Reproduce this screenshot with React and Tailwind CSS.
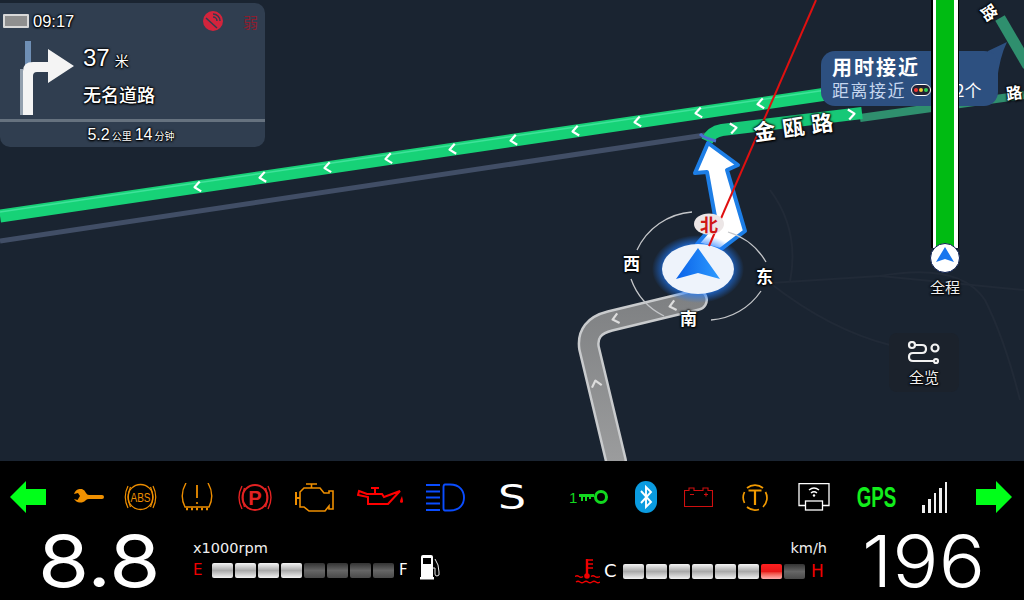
import React from "react";

const CJK = "font-['Noto_Sans_CJK_SC','Noto_Sans',sans-serif]";
const OUT = "[text-shadow:0_0_2px_#000,0_0_2px_#000,0_1px_2px_#000,0_0_3px_#000]";

function Chevron({ x, y, r = -8.5, c = "#fff", s = 2.2 }) {
  return (
    <path
      d="M3.5 -5 L-2.5 0 L3.5 5"
      transform={`translate(${x} ${y}) rotate(${r})`}
      fill="none"
      stroke={c}
      strokeWidth={s}
      strokeLinejoin="round"
    />
  );
}

const greenXs = [197, 262, 327, 388, 452, 513, 575, 637, 698, 760];

function MapDrawing() {
  return (
    <svg className="absolute inset-0" width="1024" height="461" viewBox="0 0 1024 461">
      <defs>
        <radialGradient id="glow">
          <stop offset="66%" stopColor="#1f7cff" stopOpacity="0.85" />
          <stop offset="100%" stopColor="#1f7cff" stopOpacity="0" />
        </radialGradient>
        <linearGradient id="nav" x1="0" x2="1" y1="0" y2="0">
          <stop offset="0%" stopColor="#0a62e8" />
          <stop offset="100%" stopColor="#2e9bff" />
        </linearGradient>
        <linearGradient id="grey" x1="0" x2="0" y1="300" y2="461" gradientUnits="userSpaceOnUse">
          <stop offset="0%" stopColor="#7f8183" />
          <stop offset="100%" stopColor="#9b9c9d" />
        </linearGradient>
      </defs>
      <g fill="none" stroke="#212a37" strokeWidth="2">
        <path d="M770 283 L880 276 Q960 262 985 300 Q1005 340 1020 400" />
        <path d="M880 276 L1024 290" />
        <path d="M770 190 Q800 230 790 282" />
        <path d="M770 283 Q830 330 890 345" />
      </g>
      <line x1="0" y1="241" x2="705" y2="135" stroke="#414e66" strokeWidth="5" />
      <line x1="860" y1="118" x2="1024" y2="95" stroke="#2f8f6e" strokeWidth="8" />
      <line x1="1000" y1="18" x2="1028" y2="66" stroke="#2f8f6e" strokeWidth="11" />
      <line x1="0" y1="216" x2="840" y2="92" stroke="#17d277" strokeWidth="13" />
      <line x1="0" y1="212" x2="840" y2="88" stroke="#3fe29a" strokeWidth="1.5" />
      {greenXs.map((x) => (
        <Chevron key={x} x={x} y={216 - x * 0.1476} />
      ))}
      <path d="M707 141 Q711 132 722 130 L862 113" fill="none" stroke="#17c877" strokeWidth="12" />
      <Chevron x={734} y={128} r={172} />
      <Chevron x={852} y={114} r={172} />

      <path
        d="M697 300 L610 321 Q586 327 589 348 L616 461"
        fill="none"
        stroke="#c9cbcd"
        strokeWidth="22"
        strokeLinecap="round"
      />
      <path
        d="M697 300 L610 321 Q586 327 589 348 L616 461"
        fill="none"
        stroke="url(#grey)"
        strokeWidth="17"
        strokeLinecap="round"
      />
      <Chevron x={672} y={306} r={-14} c="#ddd" />
      <Chevron x={615} y={319} r={-14} c="#ddd" />
      <Chevron x={596} y={383} r={76} c="#ddd" />

      <polygon
        points="708,143 738,165 727,170 745,231 720,250 697,244 716,222 707,172 695,173"
        fill="#fff"
        stroke="#1d7ee6"
        strokeWidth="4"
        strokeLinejoin="round"
      />
      <path d="M700 134 Q704 138 716 141" fill="none" stroke="#4a6fd0" strokeWidth="3" />

      <g fill="none" stroke="#c4c6c9" strokeWidth="1.3">
        <path d="M637 250 A 66 66 0 0 1 692 212" />
        <path d="M728 232 A 66 66 0 0 1 766 262" />
        <path d="M761 291 A 66 66 0 0 1 711 320" />
        <path d="M664 316 A 66 66 0 0 1 631 279" />
      </g>
      <ellipse cx="698" cy="269" rx="46" ry="34" fill="url(#glow)" />
      <ellipse cx="698" cy="269" rx="36" ry="25" fill="#eef3fb" />
      <polygon points="698,248 720,279 698,273 676,279" fill="url(#nav)" />
      <line x1="816" y1="0" x2="709" y2="246" stroke="#e01010" strokeWidth="2" />
      <ellipse cx="709" cy="224" rx="15" ry="10.5" fill="#ece6e6" />
    </svg>
  );
}

function TurnArrow() {
  return (
    <svg width="64" height="78" viewBox="0 0 64 78" className="shrink-0">
      <rect x="14" y="2" width="6" height="26" fill="#6f8fb5" />
      <path
        d="M12 76 V32 Q12 23 22 23 H37 V10 L63 27 L37 44 V33 H26 Q22 33 22 37 V76 Z"
        fill="#f4f4f4"
      />
      <rect x="9" y="30" width="3" height="46" fill="#93a0ae" />
    </svg>
  );
}

function Seg({ kind }) {
  const cls =
    kind === "on"
      ? "from-[#f4f4f4] via-[#a9a9a9] to-[#f2f2f2]"
      : kind === "red"
      ? "from-[#ff2020] via-[#e81818] to-[#ffb0b0]"
      : "from-[#333333] via-[#666666] to-[#4a4a4a]";
  return <div className={`w-[21px] h-[15px] rounded-[2px] bg-linear-to-b ${cls}`} />;
}

function Bar({ states }) {
  return (
    <div className="flex gap-[2px]">
      {states.map((s, i) => (
        <Seg key={i} kind={s} />
      ))}
    </div>
  );
}

const Arrow = ({ flip }) => (
  <svg width="36" height="32" viewBox="0 0 36 32" className={flip ? "-scale-x-100" : ""}>
    <polygon points="0,16 16,0 16,8 36,8 36,24 16,24 16,32" fill="#00ff19" />
  </svg>
);

const Wrench = () => (
  <svg width="31" height="16" viewBox="0 0 31 16">
    <path
      d="M9 0 A7.5 7.5 0 0 0 1 5 L5 4 L7 7 L4.5 11 L1 10 A7.5 7.5 0 0 0 13 11 Q14 10 16 10 H29 A2 2 0 0 0 29 6 H16 Q14 6 13 4 A7 7 0 0 0 9 0 Z"
      fill="#f09000"
    />
  </svg>
);

const Abs = () => (
  <svg width="33" height="30" viewBox="0 0 33 30" fill="none" stroke="#ee8e00">
    <circle cx="16.5" cy="15" r="12.5" strokeWidth="1.3" />
    <path d="M4 4 Q-1.5 15 4 26 M29 4 Q34.5 15 29 26 M6.5 5 Q2 15 6.5 25 M26.5 5 Q31 15 26.5 25" strokeWidth="1.2" />
    <text x="16.5" y="19.5" textAnchor="middle" fontSize="12.5" fill="#ee8e00" stroke="none" fontFamily="Liberation Sans, sans-serif" textLength="20" lengthAdjust="spacingAndGlyphs">ABS</text>
  </svg>
);

const Tire = () => (
  <svg width="32" height="28" viewBox="0 0 32 28" fill="none" stroke="#ee8e00" strokeWidth="1.4">
    <path d="M5 0 Q-2 12 4 24 L28 24 Q34 12 27 0" />
    <path d="M5 26 H7 M10 26 H12 M15 26 H17 M20 26 H22 M25 26 H27" strokeWidth="2.5" />
    <path d="M16 2 V15" strokeWidth="1.8" />
    <circle cx="16" cy="20" r="1.1" fill="#ee8e00" stroke="none" />
  </svg>
);

const Park = () => (
  <svg width="34" height="31" viewBox="0 0 34 31" fill="none" stroke="#e32222">
    <circle cx="17" cy="15.5" r="12.5" strokeWidth="2" />
    <path d="M4 4 Q-2 15.5 4 27 M30 4 Q36 15.5 30 27 M6.5 6 Q3 15.5 6.5 25 M27.5 6 Q31 15.5 27.5 25" strokeWidth="1.4" />
    <text x="17" y="23" textAnchor="middle" fontSize="20" fontWeight="700" fill="#e32222" stroke="none" fontFamily="Liberation Sans, sans-serif">P</text>
  </svg>
);

const Engine = () => (
  <svg width="39" height="29" viewBox="0 0 39 29" fill="none" stroke="#ee8e00" strokeWidth="1.6">
    <path d="M11 1 H22 M16.5 1 V5 M9 5 H25 L29 10 H34 V8 H38 V26 H34 V23 L30 28 H14 L9 24 H5 V9 Z" />
    <path d="M1 9 V22 M1 15 H5" strokeWidth="2" />
  </svg>
);

const Oil = () => (
  <svg width="46" height="20" viewBox="0 0 46 20" fill="none" stroke="#ff0000" strokeWidth="2">
    <path d="M2 4 L10 7 H25 L27 10 L43 4 L31 17 H11 V10 L1 8 Z" />
    <path d="M18 7 V2 M14 1 H22" strokeWidth="2" />
    <path d="M45 9 Q43 13 43 15 A2 2 0 0 0 46 15 Q46 13 45 9 Z" fill="#ff0000" stroke="none" />
  </svg>
);

const Beam = () => (
  <svg width="39" height="29" viewBox="0 0 39 29" fill="none" stroke="#0a4dff" strokeWidth="1.9">
    <path d="M0 2 H14 M0 8.5 H14 M0 14.5 H14 M0 20.5 H14 M0 27 H14" />
    <path d="M19 1.5 H24 C34 1.5 38 8 38 14.5 C38 21 34 27.5 24 27.5 H19 C17.5 27.5 17.5 26 17.5 25 V4 C17.5 2.5 18 1.5 19 1.5 Z" />
  </svg>
);

const Key = () => (
  <svg width="29" height="16" viewBox="0 0 29 16" fill="none" stroke="#12d81f">
    <circle cx="22" cy="8" r="5.5" strokeWidth="3" />
    <path d="M0 6.5 H15" strokeWidth="3" />
    <path d="M3 7 V12 M7 7 V12 M11 7 V10" strokeWidth="2" />
  </svg>
);

const Bt = () => (
  <svg width="22" height="32" viewBox="0 0 22 32">
    <rect width="22" height="32" rx="11" fill="#0a9be0" />
    <path d="M6 10 L16 21 L11 26 V6 L16 11 L6 22" fill="none" stroke="#fff" strokeWidth="1.9" />
  </svg>
);

const Battery = () => (
  <svg width="29" height="20" viewBox="0 0 29 20" fill="none" stroke="#cf0f0f" strokeWidth="1.1">
    <path d="M.5 3.5 H5 V1 H10 V3.5 H19 V1 H24 V3.5 H28.5 V19.5 H.5 Z" />
    <path d="M6 7.5 H10 M20 7.5 H24 M22 5.5 V9.5" />
  </svg>
);

const TIcon = () => (
  <svg width="26" height="29" viewBox="0 0 26 29" fill="none" stroke="#f29a00" strokeWidth="1.7">
    <path d="M5 5 A12.5 12.5 0 0 1 21 5 M23.5 9 A12.5 12.5 0 0 1 21 24 M17 26.5 A12.5 12.5 0 0 1 5 24 M2.5 20 A12.5 12.5 0 0 1 2.5 9" />
    <path d="M6.5 7.5 H19.5 M13 7.5 V22" strokeWidth="2.2" />
  </svg>
);

const Screen = () => (
  <svg width="32" height="28" viewBox="0 0 32 28" fill="none" stroke="#fff" strokeWidth="1.3">
    <path d="M7 22.5 H1 V.7 H31 V22.5 H25" />
    <rect x="7.5" y="18" width="17" height="9" />
    <path d="M11 7 Q16 3 21 7 M13 10 Q16 7.5 19 10" strokeWidth="1.4" />
    <circle cx="16" cy="12.5" r="1.2" fill="#fff" stroke="none" />
  </svg>
);

const Signal = () => (
  <div className="flex items-end gap-[3px] h-[31px]">
    {["h-[8px]", "h-[14px]", "h-[20px]", "h-[25px]", "h-[31px]"].map((h) => (
      <div key={h} className={`w-[2.6px] bg-[#f0f0f0] ${h}`} />
    ))}
  </div>
);

const Fuel = () => (
  <svg width="21" height="25" viewBox="0 0 21 25" fill="none">
    <path d="M1 2 Q1 0 3 0 H11 Q13 0 13 2 V22 H14 V24.5 H0 V22 H1 Z M3 3 V9 H11 V3 Z" fill="#fff" fillRule="evenodd" />
    <path d="M13 13 H15 V19 Q15 21 17 21 Q20 21 19 17 L18 10 L15 4" stroke="#e8e8e8" strokeWidth="1" />
  </svg>
);

const Temp = () => (
  <svg width="25" height="26" viewBox="0 0 25 26" fill="none" stroke="#f00000">
    <path d="M12 1 V16" strokeWidth="2.4" />
    <path d="M12 2 H18 M12 6 H18 M12 10 H18" strokeWidth="1.6" />
    <circle cx="12" cy="18" r="2.8" fill="#f00000" stroke="none" />
    <path d="M0 18.5 Q2 17 4 18.5 T8 18.5 M16 18.5 Q18 17 20 18.5 T25 18.5 M1 24 Q3 22.5 5 24 T9 24 T13 24 T17 24 T21 24 T25 24" strokeWidth="1.3" />
  </svg>
);

const Overview = () => (
  <svg width="34" height="25" viewBox="0 0 34 25" fill="none" stroke="#f2f2f2" strokeWidth="2.2">
    <circle cx="5" cy="4" r="3" />
    <circle cx="28" cy="7" r="3.5" />
    <circle cx="29" cy="20" r="2" />
    <path d="M8 4 H15 Q19 4 19 8 T15 12 H6 Q2 12 2 16 T6 20 H27" />
  </svg>
);

const Wifi = () => (
  <svg width="20" height="20" viewBox="0 0 20 20">
    <circle cx="10" cy="10" r="10" fill="#d3243c" />
    <path d="M10 3 A7 7 0 0 1 17 10 M10 6 A4 4 0 0 1 14 10" fill="none" stroke="#2f3d4f" strokeWidth="1.5" />
    <path d="M3 7 L14 17" stroke="#2f3d4f" strokeWidth="1.5" />
  </svg>
);

export default function App() {
  return (
    <div className={`w-[1024px] h-[600px] overflow-hidden flex flex-col bg-black ${CJK}`}>
      <div className="relative h-[461px] shrink-0 bg-[#1a2431] overflow-hidden">
        <MapDrawing />

        <div className={`absolute left-[753px] top-[114px] -rotate-[8deg] text-[22px] font-bold tracking-[7px] leading-none whitespace-nowrap text-white ${OUT}`}>金瓯路</div>
        <div className={`absolute left-[982px] top-[4px] rotate-[55deg] text-[16px] font-bold leading-none text-white ${OUT}`}>路</div>

        <svg className="absolute left-[980px] top-[40px]" width="30" height="40" viewBox="0 0 30 40">
          <path d="M8 11 L27 2 Q20 16 17 40 L0 40 Z" fill="#2d5080" />
        </svg>
        <div className="absolute left-[821px] top-[51px] w-[177px] h-[55px] rounded-[14px] bg-[#2d5080] pl-[11px] pt-[4px]">
          <div className="text-[20px] leading-[24px] tracking-[2px] font-bold text-white whitespace-nowrap">用时接近</div>
          <div className="flex items-center text-[17px] leading-[22px] text-[#c5d6ef] whitespace-nowrap">
            <span className="tracking-[1.5px]">距离接近</span>
            <span className="ml-[5px] w-[20px] h-[12px] rounded-full border border-white flex items-center justify-center gap-[1px] bg-[#223]">
              <span className="w-[4px] h-[4px] rounded-full bg-[#e33]" />
              <span className="w-[4px] h-[4px] rounded-full bg-[#ec3]" />
              <span className="w-[4px] h-[4px] rounded-full bg-[#3c5]" />
            </span>
            <span className="ml-[24px] text-white">2个</span>
          </div>
        </div>
        <div className={`absolute left-[1006px] top-[84px] -rotate-[8deg] text-[16px] font-bold leading-none text-white ${OUT}`}>路</div>

        <div className="absolute left-[931px] top-0 w-[28px] h-[248px] bg-black px-[1.5px]">
          <div className="h-full bg-white px-[3.5px]">
            <div className="h-full bg-[#00bb12]" />
          </div>
        </div>
        <div className="absolute left-[930px] top-[243px] w-[30px] h-[30px] rounded-full bg-white border-[1.5px] border-[#0b1e50] flex items-start justify-center pt-[3px]">
          <svg width="18" height="17" viewBox="0 0 18 17"><polygon points="9,0 18,15 9,12 0,15" fill="#1976ee" /></svg>
        </div>
        <div className={`absolute left-[925px] top-[277px] w-[40px] text-center text-[15px] leading-[20px] text-[#f0f0f0] ${OUT}`}>全程</div>

        <div className="absolute left-[889px] top-[333px] w-[70px] h-[59px] rounded-[8px] bg-[#1b222c] flex flex-col items-center pt-[8px]">
          <Overview />
          <div className={`text-[15px] leading-[18px] text-[#f0f0f0] mt-[2px] ${OUT}`}>全览</div>
        </div>

        <div className={`absolute left-[623px] top-[253px] text-[17px] font-bold leading-[20px] text-white ${OUT}`}>西</div>
        <div className={`absolute left-[756px] top-[266px] text-[17px] font-bold leading-[20px] text-white ${OUT}`}>东</div>
        <div className={`absolute left-[680px] top-[308px] text-[17px] font-bold leading-[20px] text-white ${OUT}`}>南</div>
        <div className="absolute left-[700px] top-[214px] text-[18px] font-bold leading-[20px] text-[#d01818]">北</div>

        <div className="absolute left-0 top-[3px] w-[265px] h-[144px] rounded-[10px] rounded-tl-none bg-[#303e50] flex flex-col text-white">
          <div className="h-[118px] flex flex-col">
            <div className="h-[36px] flex items-center pl-[3px] pr-[7px]">
              <div className="w-[26px] h-[14px] border-[2px] border-[#d8d8d8] bg-[#8f8f8f] rounded-[1px] bg-clip-content" />
              <span className={`ml-[4px] font-['Liberation_Sans'] text-[16.5px] leading-none ${OUT}`}>09:17</span>
              <div className="ml-auto flex items-center">
                <Wifi />
                <span className="ml-[20px] text-[15px] leading-none text-[#8a1f30]">弱</span>
              </div>
            </div>
            <div className="flex pl-[11px]">
              <TurnArrow />
              <div className="ml-[8px] flex flex-col">
                <div className={`flex items-baseline h-[38px] -mt-[1px] ${OUT}`}>
                  <span className="font-['Liberation_Sans'] text-[24px] leading-[40px]">37</span>
                  <span className="ml-[5px] text-[14px]">米</span>
                </div>
                <div className={`mt-[5px] text-[18px] leading-[26px] font-medium ${OUT}`}>无名道路</div>
              </div>
            </div>
          </div>
          <div className="h-[3px] bg-[#66727f]" />
          <div className={`flex-1 flex items-baseline justify-center pt-[1px] pr-[3px] ${OUT}`}>
            <span className="font-['Liberation_Sans'] text-[16px] leading-[21px]">5.2</span>
            <span className="ml-[2px] text-[10px]">公里</span>
            <span className="ml-[3px] font-['Liberation_Sans'] text-[16px]">14</span>
            <span className="ml-[2px] text-[10px]">分钟</span>
          </div>
        </div>
      </div>

      <div className="flex-1 flex flex-col bg-black text-white font-['DejaVu_Sans',sans-serif]">
        <div className="h-[64px] pt-[8px] flex items-center pl-[10px]">
          <Arrow />
          <div className="ml-[27px]"><Wrench /></div>
          <div className="ml-[20px]"><Abs /></div>
          <div className="ml-[24px]"><Tire /></div>
          <div className="ml-[25px]"><Park /></div>
          <div className="ml-[23px]"><Engine /></div>
          <div className="ml-[23px]"><Oil /></div>
          <div className="ml-[23px]"><Beam /></div>
          <div className="ml-[33px] w-[28px] text-center text-[34px] leading-none font-medium [transform:scaleX(1.3)]">S</div>
          <div className="ml-[43px] flex items-center">
            <span className="text-[#12d81f] text-[15px] leading-none font-['Liberation_Sans']">1</span>
            <span className="ml-[2px]"><Key /></span>
          </div>
          <div className="ml-[27px]"><Bt /></div>
          <div className="ml-[27px]"><Battery /></div>
          <div className="ml-[29px]"><TIcon /></div>
          <div className="ml-[30px]"><Screen /></div>
          <div className="ml-[25px] w-[43px] flex justify-center whitespace-nowrap text-[#12ee1c] text-[24px] leading-none font-bold font-['Liberation_Sans'] [transform:scale(0.78,1.25)]">GPS</div>
          <div className="ml-[24px]"><Signal /></div>
          <div className="ml-[29px]"><Arrow flip /></div>
        </div>

        <div className="flex-1 flex">
          <div className="w-[193px] shrink-0 pl-[38px]">
            <div className="w-fit origin-left [transform:scaleX(1.15)] text-[72px] leading-[72px] font-['Inter',sans-serif] font-normal whitespace-nowrap">8.8</div>
          </div>
          <div className="w-[380px] shrink-0 pt-[14px]">
            <div className="text-[14.5px] leading-[18px] text-[#f0f0f0]">x1000rpm</div>
            <div className="flex items-center mt-[6px] h-[15px]">
              <span className="w-[19px] text-[#f00000] text-[15px] leading-none">E</span>
              <Bar states={["on", "on", "on", "on", "off", "off", "off", "off"]} />
              <span className="ml-[5px] text-[15px] leading-none">F</span>
              <span className="ml-[12px] -translate-y-[3px]"><Fuel /></span>
            </div>
          </div>
          <div className="w-[254px] shrink-0 pt-[14px] pl-[2px]">
            <div className="text-[14.5px] leading-[18px] text-right text-[#f0f0f0]">km/h</div>
            <div className="flex items-center mt-[1px]">
              <Temp />
              <span className="ml-[4px] w-[19px] text-[18px] leading-none">C</span>
              <Bar states={["on", "on", "on", "on", "on", "on", "red", "off"]} />
              <span className="ml-[6px] text-[#f00000] text-[17px] leading-none">H</span>
            </div>
          </div>
          <div className="flex-1 pl-[35px]">
            <div className="w-fit origin-left [transform:scaleX(1.07)] text-[72px] leading-[72px] font-['Inter',sans-serif] font-light whitespace-nowrap">196</div>
          </div>
        </div>
      </div>
    </div>
  );
}
